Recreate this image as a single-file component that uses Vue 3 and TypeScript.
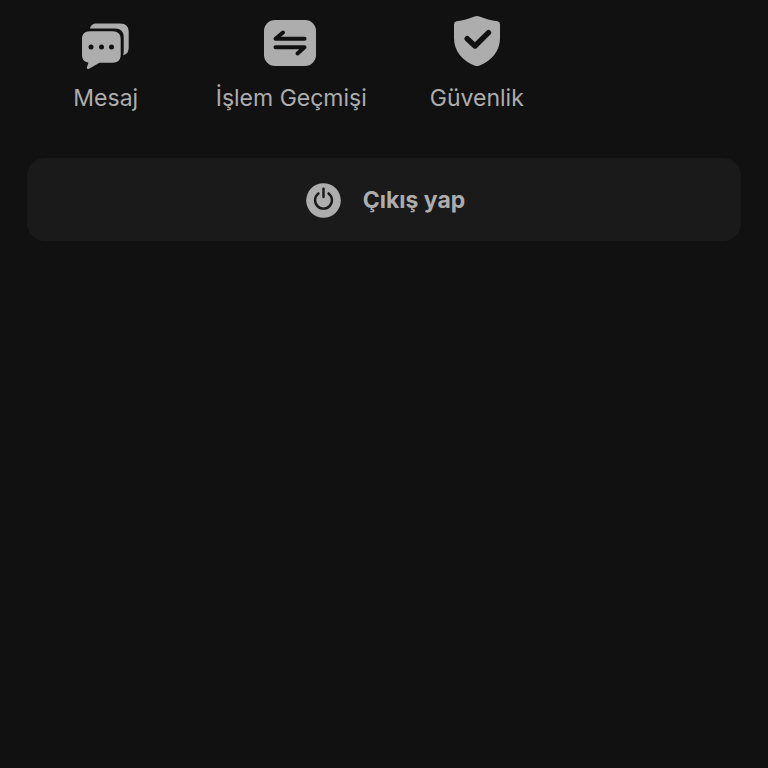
<script setup lang="ts">
type IconName = 'message' | 'history' | 'security'

interface Shortcut {
  icon: IconName
  label: string
}

const shortcuts: Shortcut[] = [
  { icon: 'message', label: 'Mesaj' },
  { icon: 'history', label: 'İşlem Geçmişi' },
  { icon: 'security', label: 'Güvenlik' },
]
</script>

<template>
  <main class="screen">
    <nav class="shortcuts">
      <a v-for="item in shortcuts" :key="item.icon" class="shortcut" href="#">
        <svg class="shortcut-icon" viewBox="0 0 56 56" aria-hidden="true">
          <template v-if="item.icon === 'message'">
            <path
              class="fill"
              d="M12 14.500C12.500 11.500 15 9.500 18.500 9.500H42C48 9.500 50.700 12.500 50.700 18V33C50.700 38 49 40.500 45 41.200C45.600 40 45.700 38.500 45.700 37V23C45.700 17.500 42.500 14.500 37 14.500Z"
            />
            <path
              class="fill"
              d="M12 17.300H34.500C40 17.300 42.700 20 42.700 25.500V40.500C42.700 46 40 48.700 34.500 48.700H21.500L11 54.800C9.500 55.500 8.500 54.500 9 53L10.500 48.600C6 48 4 45.500 4 40.500V25.500C4 20 6.500 17.300 12 17.300Z"
            />
            <circle class="ink-fill" cx="13" cy="33" r="2.500" />
            <circle class="ink-fill" cx="23.500" cy="33" r="2.500" />
            <circle class="ink-fill" cx="33.500" cy="33" r="2.500" />
          </template>
          <template v-else-if="item.icon === 'history'">
            <rect class="fill" x="1" y="6" width="52" height="46" rx="11" />
            <path class="ink-line" d="M41.500 24.800H12.500L20 18.500M12.500 33.200H41.500L34.500 39.500" />
          </template>
          <template v-else>
            <path
              class="fill"
              d="M25.500 2.500Q28 1.700 30.500 2.500C36 4.800 42 6.300 48.500 7.300Q51 7.900 51 10.500V24C51 37 42.500 47 30 51.700Q28 52.400 26 51.700C13.500 47 5 37 5 24V10.500Q5 7.900 7.500 7.300C14 6.300 20 4.800 25.500 2.500Z"
            />
            <path class="ink-check" d="M18.200 24.700L26 32L39.500 18.700" />
          </template>
        </svg>
        <span class="shortcut-label">{{ item.label }}</span>
      </a>
    </nav>

    <button class="logout" type="button">
      <svg class="logout-icon" viewBox="0 0 36 36" aria-hidden="true">
        <circle class="fill" cx="18" cy="18" r="17.800" />
        <path class="power" d="M12.800 10.700A8.700 8.700 0 1 0 23.200 10.700M18 6V14.500" />
      </svg>
      <span>Çıkış yap</span>
    </button>
  </main>
</template>

<style>
body {
  margin: 0;
  background: #111111;
}
</style>

<style scoped>
.screen {
  box-sizing: border-box;
  min-height: 100vh;
  padding: 14px 13px;
  background: #111111;
  color: #adadad;
  font-family: Inter, "Liberation Sans", sans-serif;
}

.shortcuts {
  display: grid;
  grid-template-columns: repeat(4, 1fr);
}

.shortcut {
  display: flex;
  flex-direction: column;
  align-items: center;
  gap: 12px;
  color: inherit;
  text-decoration: none;
}

.shortcut-icon {
  width: 56px;
  height: 56px;
}

.shortcut-label {
  font-size: 23px;
  line-height: 32px;
  white-space: nowrap;
}

.logout {
  display: flex;
  align-items: center;
  justify-content: center;
  gap: 22px;
  width: calc(100% - 28px);
  margin: 44px 14px 0;
  padding: 25px 24px 23px 27px;
  border: 0;
  border-radius: 18px;
  background: #1a1a1a;
  color: inherit;
  font-family: inherit;
  font-size: 23px;
  font-weight: 700;
  line-height: 35px;
}

.logout-icon {
  width: 35px;
  height: 35px;
}

.fill {
  fill: #adadad;
}

.ink-fill {
  fill: #111111;
}

.ink-line,
.ink-check,
.power {
  fill: none;
  stroke: #111111;
  stroke-linecap: round;
  stroke-linejoin: round;
}

.ink-line {
  stroke-width: 4;
}

.ink-check {
  stroke-width: 5.4;
}

.power {
  stroke: #1a1a1a;
  stroke-width: 2.5;
}
</style>
